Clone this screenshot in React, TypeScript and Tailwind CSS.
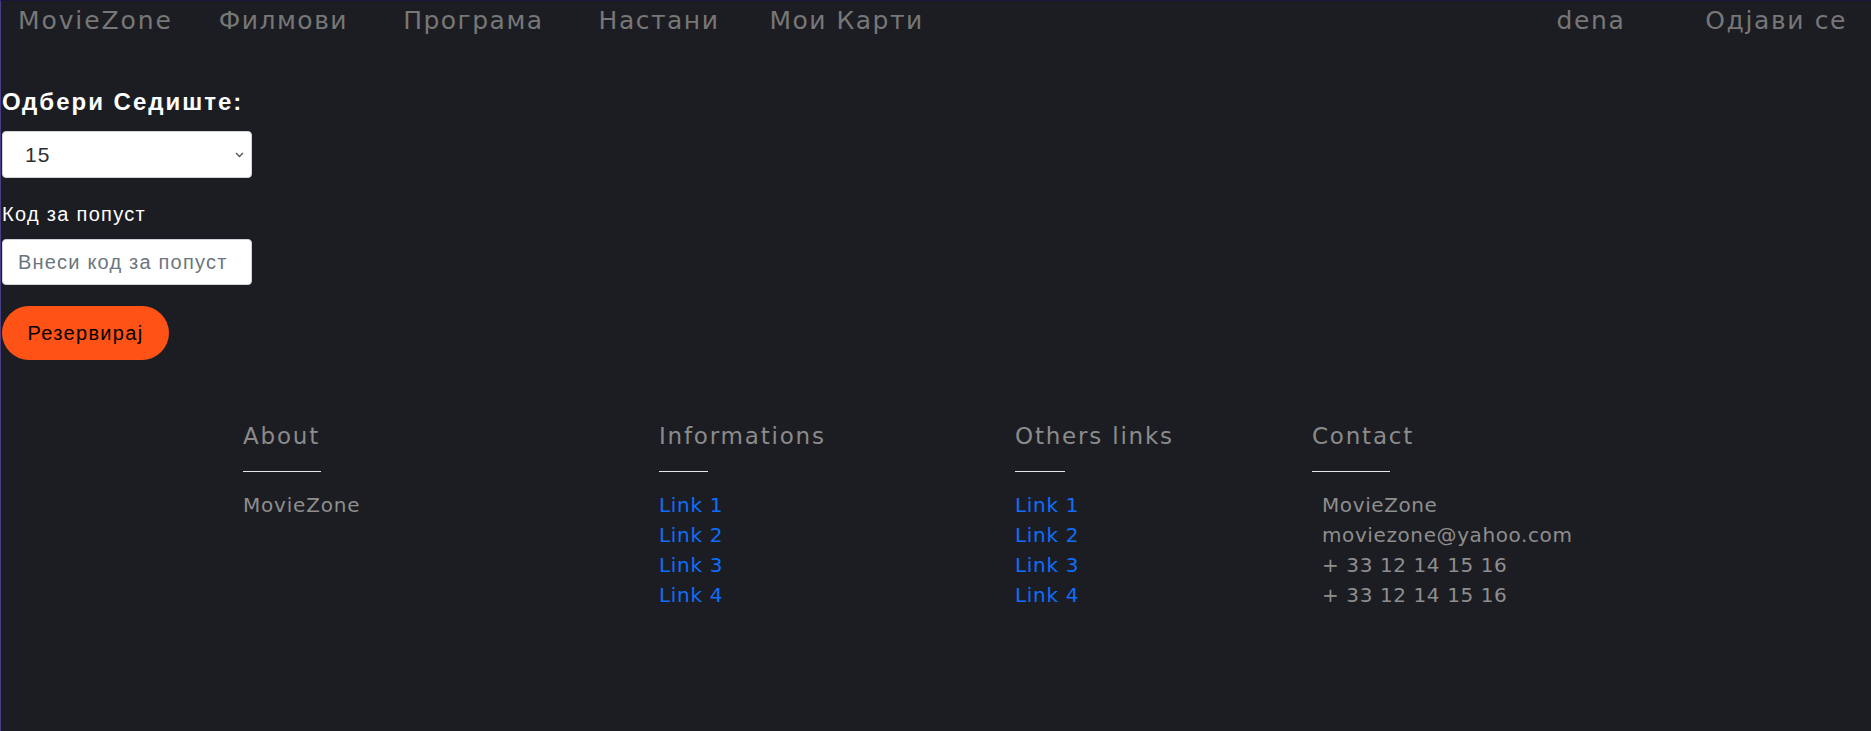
import React from "react";

const navLinks = [
  { label: "Филмови", mr: "mr-[55px]" },
  { label: "Програма", mr: "mr-[55px]" },
  { label: "Настани", mr: "mr-[50px]" },
  { label: "Мои Карти", mr: "" },
];
const links = ["Link 1", "Link 2", "Link 3", "Link 4"];
const contact = ["MovieZone", "moviezone@yahoo.com", "+ 33 12 14 15 16", "+ 33 12 14 15 16"];

const App: React.FC = () => {
  return (
    <div className="min-h-screen bg-[#1c1d22] border-l border-t border-l-[#4b3c86] border-t-[#16163a] font-['DejaVu_Sans',sans-serif]">
      {/* Navbar */}
      <nav className="flex items-center justify-between h-[40px] pl-[17px] pr-[24px] text-[25px] leading-[38px] tracking-[1.9px] text-[#777777]">
        <div className="flex items-center">
          <a className="mr-[46px]">MovieZone</a>
          {navLinks.map((l) => (
            <a key={l.label} className={`${l.mr} tracking-[1.5px]`}>
              {l.label}
            </a>
          ))}
        </div>
        <div className="flex items-center gap-[80px] tracking-[1.6px]">
          <a>dena</a>
          <a>Одјави се</a>
        </div>
      </nav>

      {/* Seat form */}
      <div className="flex flex-col items-start pl-[1px] font-['Liberation_Sans',sans-serif]">
        <h3 className="mt-[47px] text-[24px] leading-[28px] font-bold tracking-[2px] text-white">
          Одбери Седиште:
        </h3>
        <div className="relative mt-[15px] w-[250px]">
          <select className="appearance-none w-full h-[47px] rounded-[4px] border border-[#ced4da] bg-white pl-[22px] text-[21px] tracking-[1px] text-[#2b2f33] outline-none">
            <option>15</option>
          </select>
          <svg
            className="absolute right-[8px] top-[21px] pointer-events-none"
            width="9"
            height="6"
            viewBox="0 0 9 6"
            fill="none"
            stroke="#555"
            strokeWidth="1.4"
          >
            <path d="M1 1l3.5 3.5L8 1" />
          </svg>
        </div>
        <label className="mt-[25px] text-[20px] leading-[22px] tracking-[1.3px] text-white">
          Код за попуст
        </label>
        <input
          placeholder="Внеси код за попуст"
          className="mt-[14px] w-[250px] h-[46px] rounded-[4px] border border-[#ced4da] bg-white pl-[15px] text-[20px] tracking-[1.2px] text-[#212529] placeholder:text-[#6c757d] outline-none"
        />
        <button className="mt-[21px] w-[167px] h-[54px] rounded-full bg-[#ff5217] text-[20px] tracking-[1.3px] text-black">
          Резервирај
        </button>
      </div>

      {/* Footer */}
      <footer className="grid grid-cols-[416px_356px_297px_auto] pl-[242px] pt-[62px] pb-[100px]">
        <div>
          <h4 className="text-[23px] leading-[28px] tracking-[1.8px] text-[#8b8b8b]">About</h4>
          <div className="mt-[21px] w-[78px] h-px bg-[#e5e5e5]" />
          <p className="mt-[18px] text-[20px] leading-[30px] tracking-[0.8px] text-[#8e8e8e]">MovieZone</p>
        </div>
        <div>
          <h4 className="text-[23px] leading-[28px] tracking-[1.8px] text-[#8b8b8b]">Informations</h4>
          <div className="mt-[21px] w-[49px] h-px bg-[#e5e5e5]" />
          <ul className="mt-[18px] text-[20px] leading-[30px] tracking-[0.7px]">
            {links.map((l) => (
              <li key={l}>
                <a className="text-[#0d6efd]">{l}</a>
              </li>
            ))}
          </ul>
        </div>
        <div>
          <h4 className="text-[23px] leading-[28px] tracking-[1.8px] text-[#8b8b8b]">Others links</h4>
          <div className="mt-[21px] w-[50px] h-px bg-[#e5e5e5]" />
          <ul className="mt-[18px] text-[20px] leading-[30px] tracking-[0.7px]">
            {links.map((l) => (
              <li key={l}>
                <a className="text-[#0d6efd]">{l}</a>
              </li>
            ))}
          </ul>
        </div>
        <div>
          <h4 className="text-[23px] leading-[28px] tracking-[1.8px] text-[#8b8b8b]">Contact</h4>
          <div className="mt-[21px] w-[78px] h-px bg-[#e5e5e5]" />
          <ul className="mt-[18px] pl-[10px] text-[20px] leading-[30px] tracking-[0.6px] text-[#8e8e8e]">
            {contact.map((c, i) => (
              <li key={i}>{c}</li>
            ))}
          </ul>
        </div>
      </footer>
    </div>
  );
};

export default App;
